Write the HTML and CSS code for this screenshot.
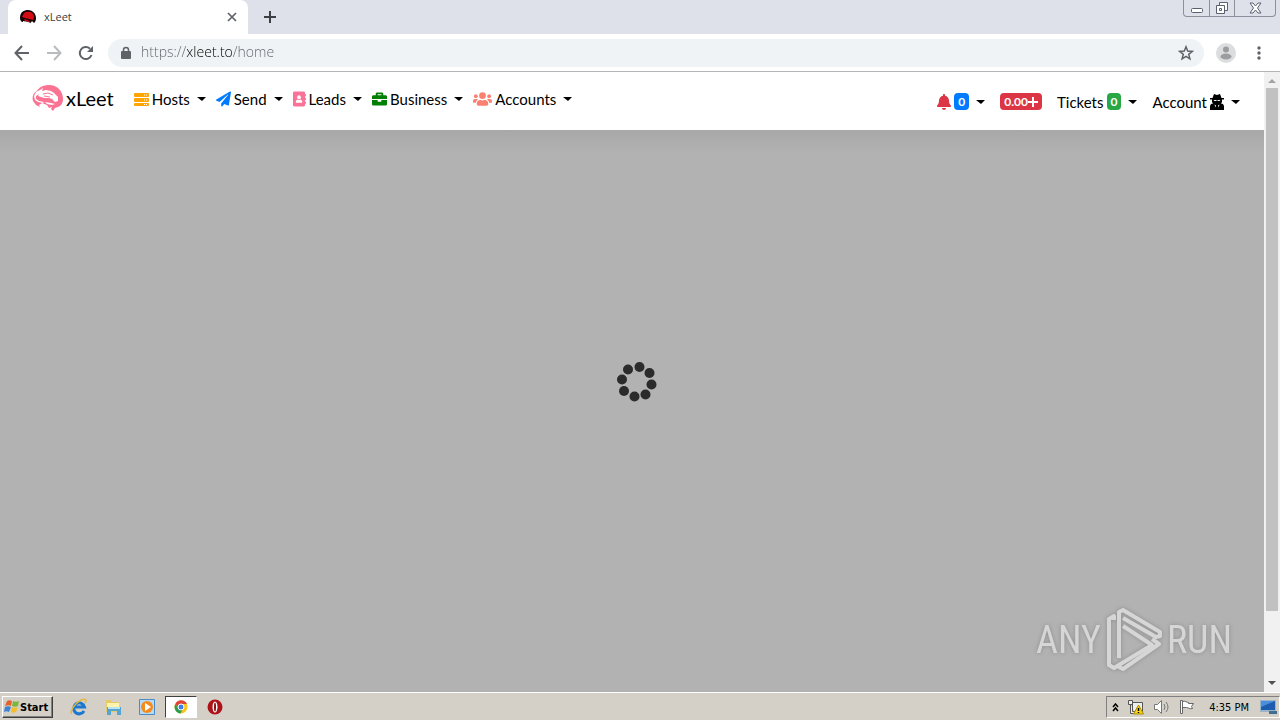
FILE: index.html
```html
<!DOCTYPE html>
<html lang="en">
<head>
    <meta charset="UTF-8">
    <meta name="viewport" content="width=device-width, initial-scale=1.0">
    <title>xLeet</title>
    <link rel="stylesheet" href="styles.css">
</head>
<body>

  <header class="tab-strip">
    <div class="tab">
      <svg class="favicon" viewBox="0 0 16 16">
        <path fill="#160508" d="M0 9C0 3 4 1 8 1s8 3 8 8c0 3-1 4-2 5l-2-2-2 3-3-2H3C1 13 0 11 0 9z"/>
        <path fill="#d40b12" d="M3 6c1-3 4-4 6-3 3 0 5 2 5 5l-1 3-4-1-4-1-3-1zM4 10l6 2-1 1-4-1z"/>
        <path fill="#fff" d="M3 12l5 1 3 1-1 2-3-1-4-1z"/>
      </svg>
      <span class="tab-title">xLeet</span>
      <button class="icon-btn" aria-label="Close tab">
        <svg width="10" height="10" viewBox="0 0 10 10"><path d="M1 1l8 8M9 1L1 9" stroke="#5f6368" stroke-width="1.700"/></svg>
      </button>
    </div>
    <button class="icon-btn new-tab" aria-label="New tab">
      <svg width="12" height="12" viewBox="0 0 12 12"><path d="M6 0v12M0 6h12" stroke="#3c4043" stroke-width="2"/></svg>
    </button>
    <div class="window-controls">
      <button aria-label="Minimize"><svg width="12" height="16" viewBox="0 0 12 16"><rect x=".5" y="8.500" width="11" height="4" rx="1" fill="#fff" stroke="#5b6070"/></svg></button>
      <button aria-label="Restore"><svg width="14" height="14" viewBox="0 0 14 14" fill="#fff" stroke="#5b6070"><path d="M4.500 1.500h8v8h-8z"/><path d="M1.500 4.500h8v8h-8z"/><path d="M4.500 7.500h2v2h-2z"/></svg></button>
      <button class="wide" aria-label="Close"><svg width="13" height="12" viewBox="0 0 13 12"><path d="M1 1h3l2.500 3L9 1h3L8.500 6l3.500 5H9L6.500 8 4 11H1l3.500-5z" fill="#fff" stroke="#5b6070"/></svg></button>
    </div>
  </header>

  <div class="toolbar">
    <button class="icon-btn" aria-label="Back"><svg width="16" height="16" viewBox="0 0 16 16"><path d="M15 8H2M8 1L1.500 8 8 15" fill="none" stroke="#5f6368" stroke-width="2"/></svg></button>
    <button class="icon-btn" aria-label="Forward"><svg width="16" height="16" viewBox="0 0 16 16"><path d="M1 8h13M8 1l6.500 7L8 15" fill="none" stroke="#b9bbbe" stroke-width="2"/></svg></button>
    <button class="icon-btn" aria-label="Reload"><svg width="16" height="16" viewBox="0 0 16 16"><path d="M13.500 10A6 6 0 1 1 12 3.700" fill="none" stroke="#5f6368" stroke-width="2"/><path d="M15 1v6H9z" fill="#5f6368"/></svg></button>
    <div class="omnibox">
      <svg width="10" height="14" viewBox="0 0 10 14"><path d="M2.500 6V4a2.500 2.500 0 0 1 5 0v2" fill="none" stroke="#5f6368" stroke-width="1.500"/><rect y="5" width="10" height="8" rx="1" fill="#5f6368"/></svg>
      <input class="url" type="text" value="https://xleet.to/home" aria-label="Address">
      <button class="icon-btn" aria-label="Bookmark"><svg width="16" height="16" viewBox="0 0 16 16"><path d="M8 1.800l1.700 4.300 4.600.3-3.600 2.900 1.200 4.500L8 11.300l-3.900 2.500 1.200-4.500-3.600-2.900 4.600-.3z" fill="none" stroke="#5f6368" stroke-width="1.500"/></svg></button>
    </div>
    <button class="icon-btn" aria-label="Profile"><svg width="20" height="20" viewBox="0 0 20 20"><circle cx="10" cy="10" r="10" fill="#dcdddf"/><circle cx="10" cy="6.500" r="3" fill="#9b9da1"/><ellipse cx="10" cy="13.500" rx="5.500" ry="3" fill="#9b9da1"/></svg></button>
    <button class="icon-btn menu" aria-label="Menu"><svg width="4" height="14" viewBox="0 0 4 14" fill="#5f6368"><circle cx="2" cy="2" r="1.700"/><circle cx="2" cy="7" r="1.700"/><circle cx="2" cy="12" r="1.700"/></svg></button>
  </div>

  <div class="viewport">
    <main class="page">
      <nav class="navbar">
        <a class="brand" href="#">
          <svg width="32" height="28" viewBox="0 0 32 28">
            <path fill="#fb7393" d="M1 17c-1-4 0-8 4-10 2-4 7-6 12-6 8 0 14 6 14 14 0 4-2 7-5 8l-3 1-2 3-2-2 1-2-3 1-2-3-5-2-3 2 1 2-4-2-3-4z"/>
            <path fill="#fff" d="M8 6l3-2-1 3 4-1 5 1 3 2 4 4 0 4-3 1-3-3-3-1-5 0-6-2 1-2-3 2 0 3 3 2 5 1-1 1-5-1-3-2-1-4 2-4zM13 18l6 1 4 1-3 1-5-1z"/>
            <path fill="none" stroke="#fb7393" d="M11 10l5-1 5 2M12 12l6 1"/>
          </svg>
          <span>xLeet</span>
        </a>

        <div class="nav-left">
          <button class="nav-link">
            <svg width="15" height="16" viewBox="0 0 15 16"><g fill="orange"><rect y="2" width="15" height="4" rx="1"/><rect y="7" width="15" height="4" rx="1"/><rect y="12" width="15" height="3" rx="1"/></g><g fill="#fff"><path d="M10 3.500h1v1h-1zM12 3.500h1v1h-1zM10 8.500h1v1h-1zM12 8.500h1v1h-1zM10 13h1v1h-1zM12 13h1v1h-1z"/></g></svg>
            Hosts<span class="caret"></span>
          </button>
          <button class="nav-link">
            <svg width="15" height="16" viewBox="0 0 512 512"><path fill="#007bff" d="M476 3.200L12.500 270.600c-18.100 10.400-15.800 35.600 2.200 43.200L121 358.400l287.300-253.200c5.500-4.900 13.300 2.600 8.600 8.300L176 407v80.500c0 23.600 28.500 32.900 42.500 15.800L282 426l124.600 52.200c14.200 6 30.400-2.900 33-18.200l72-432C515 7.800 493.300-6.800 476 3.200z"/></svg>
            Send<span class="caret"></span>
          </button>
          <button class="nav-link">
            <svg width="13" height="16" viewBox="0 0 448 512"><path fill="#fb7299" d="M436 160c6.600 0 12-5.400 12-12v-40c0-6.600-5.400-12-12-12h-20V48c0-26.500-21.500-48-48-48H48C21.500 0 0 21.500 0 48v416c0 26.500 21.500 48 48 48h320c26.500 0 48-21.500 48-48v-48h20c6.600 0 12-5.400 12-12v-40c0-6.600-5.400-12-12-12h-20v-64h20c6.600 0 12-5.400 12-12v-40c0-6.600-5.400-12-12-12h-20v-64z"/><circle cx="208" cy="192" r="64" fill="#fff"/><path fill="#fff" d="M96 365c0-60 40-89 70-89 30 14 55 14 84 0 30 0 70 29 70 89 0 12-10 19-22 19H118c-12 0-22-7-22-19z"/></svg>
            Leads<span class="caret"></span>
          </button>
          <button class="nav-link">
            <svg width="15" height="16" viewBox="0 0 512 512"><path fill="green" d="M320 336c0 8.840-7.160 16-16 16h-96c-8.840 0-16-7.160-16-16v-48H0v144c0 25.600 22.400 48 48 48h416c25.600 0 48-22.400 48-48V288H320v48zm144-208h-80V80c0-25.600-22.400-48-48-48H176c-25.600 0-48 22.400-48 48v48H48c-25.600 0-48 22.400-48 48v80h512v-80c0-25.600-22.400-48-48-48zm-144 0H192V96h128v32z"/></svg>
            Business<span class="caret"></span>
          </button>
          <button class="nav-link">
            <svg width="19" height="16" viewBox="0 0 640 512" fill="salmon"><circle cx="96" cy="160" r="64"/><circle cx="544" cy="160" r="64"/><circle cx="320" cy="144" r="112"/><path d="M0 320c0-35 29-64 64-64h64c18 0 33 7 45 18-40 22-69 62-75 110H32c-18 0-32-14-32-32zM640 320c0-35-29-64-64-64h-64c-18 0-33 7-45 18 40 22 69 62 75 110h66c18 0 32-14 32-32zM128 403c0-64 52-115 115-115h8c45 21 93 21 138 0h8c63 0 115 51 115 115v29c0 27-21 48-48 48H176c-27 0-48-21-48-48z"/></svg>
            Accounts<span class="caret"></span>
          </button>
        </div>

        <div class="nav-right">
          <button class="nav-link" aria-label="Notifications">
            <svg width="14" height="16" viewBox="0 0 448 512"><path fill="#dc3545" d="M224 512c35.320 0 63.970-28.650 63.970-64H160.030c0 35.350 28.650 64 63.970 64zm215.390-149.710c-19.320-20.760-55.470-51.990-55.470-154.290 0-77.700-54.480-139.900-127.940-155.160V32c0-17.670-14.320-32-31.980-32s-31.980 14.330-31.980 32v20.840C118.560 68.100 64.080 130.300 64.080 208c0 102.300-36.150 133.530-55.470 154.290-6 6.450-8.660 14.160-8.610 21.710.11 16.400 12.980 32 32.100 32h383.800c19.120 0 32-15.600 32.100-32 .05-7.550-2.610-15.270-8.610-21.710z"/></svg>
            <span class="badge blue">0</span><span class="caret"></span>
          </button>
          <a class="badge red" href="#">0.00<svg width="10" height="10" viewBox="0 0 10 10"><path d="M5 0v10M0 5h10" stroke="#fff" stroke-width="2"/></svg></a>
          <button class="nav-link">Tickets <span class="badge green">0</span><span class="caret"></span></button>
          <button class="nav-link">Account
            <svg width="14" height="16" viewBox="0 0 14 16"><path d="M4 0l3 1 3-1 1.500 4H14v1.500h-2L12 8l-1 1.500 2 .5 1 2v4H0v-4l1-2 2-.5L2 8V5.500H0V4h2.500z"/><path fill="#fff" d="M3.500 6h3v1h-2zM7.500 6h3l-1 1h-2zM4.500 10.500l1.500 1-.5 2zM9.500 10.500l-1.500 1 .5 2z"/></svg>
            <span class="caret"></span>
          </button>
        </div>
      </nav>

      <div class="loading">
        <svg class="spinner" width="42" height="42" viewBox="0 0 42 42" fill="#2b2b2b">
          <circle cx="23.500" cy="6" r="5"/><circle cx="33.500" cy="12" r="5"/><circle cx="35.500" cy="23.500" r="5"/><circle cx="29.500" cy="33.500" r="5"/><circle cx="18.500" cy="35.500" r="5"/><circle cx="8" cy="30" r="5"/><circle cx="6" cy="18.500" r="5"/><circle cx="12" cy="8.500" r="5"/>
        </svg>
        <div class="watermark">
          <span>ANY</span>
          <svg width="56" height="64" viewBox="0 0 56 64" fill="none" stroke="#d6d6d6" stroke-width="4" stroke-linejoin="round">
            <path d="M8 12V8L3 11v46l5 3 38-23-29-19"/>
            <path d="M13 50V4l4-2 37 22v4l-4 1-33-19"/>
            <path d="M46 31l7 5-36 25-4-2v-3"/>
          </svg>
          <span>RUN</span>
        </div>
      </div>
    </main>

    <div class="scrollbar">
      <svg width="8" height="4" viewBox="0 0 8 4"><path d="M0 4l4-4 4 4z" fill="#a3a3a3"/></svg>
      <div class="track"><div class="thumb"></div></div>
      <svg width="8" height="4" viewBox="0 0 8 4"><path d="M0 0l4 4 4-4z" fill="#505050"/></svg>
    </div>
  </div>

  <footer class="taskbar">
    <button class="start">
      <svg width="16" height="16" viewBox="0 0 16 16"><path fill="#e8602c" d="M3 2c2-1 3-1 5 0L7 7C5 6 4 6 1 7z"/><path fill="#7db63c" d="M9 2c2 1 4 1 6 0l-1 5c-2 1-4 1-6 0z"/><path fill="#3b83d3" d="M1 8c2-1 4-1 6 0l-2 5c-2-1-3-1-5 0z"/><path fill="#f5bd2b" d="M8 8c2 1 4 1 6 0l-2 5c-2 1-4 1-5 0z"/></svg>
      Start
    </button>
    <div class="quick">
      <button aria-label="Internet Explorer"><svg width="18" height="18" viewBox="0 0 18 18" fill="none"><path d="M14 13a5.500 5.500 0 1 1 .5-4H5" stroke="#1c78cf" stroke-width="3"/><path d="M2 16c-3-2 3-11 9-14 5-2 6 0 4 3" stroke="#e5b73b" stroke-width="1.500"/></svg></button>
      <button aria-label="Explorer"><svg width="18" height="18" viewBox="0 0 18 18"><path fill="#e5ca67" d="M2 2h5l1 2h7v10H2z"/><path fill="#fff3ae" d="M3 5h12v7H3z"/><path fill="#55a5d2" d="M3 9h14v8h-4v-4H7v4H3z"/><path fill="#b9e2f3" d="M4 9h12v2H4z"/></svg></button>
      <button aria-label="Media Player"><svg width="18" height="18" viewBox="0 0 18 18"><path fill="#b8d9f2" stroke="#4b8cc8" d="M1.500 1.500h15v15h-15z"/><circle cx="9" cy="9" r="6" fill="#f48b1c"/><path fill="#fff" d="M7 5l6 4-6 4z"/></svg></button>
      <button class="active" aria-label="Chrome"><svg width="14" height="14" viewBox="0 0 14 14"><circle cx="7" cy="7" r="6.500" fill="#fbc51b"/><path fill="#de4437" d="M1.300 4A6.500 6.500 0 0 1 13 4H7L5 9z"/><path fill="#2b9d4c" d="M1.300 4A6.500 6.500 0 0 0 6.500 13.500L9.500 8H4z"/><circle cx="7" cy="7" r="3" fill="#3f7de8" stroke="#fff"/></svg></button>
      <button aria-label="Opera"><svg width="16" height="16" viewBox="0 0 16 16"><circle cx="8" cy="8" r="7.500" fill="#ad1218"/><ellipse cx="8" cy="8" rx="2.500" ry="5.500" fill="#fff"/><ellipse cx="8" cy="8" rx="1" ry="4.500" fill="#8d1015"/></svg></button>
    </div>
    <div class="tray">
      <svg width="7" height="9" viewBox="0 0 7 9" fill="none" stroke="#000" stroke-width="1.500"><path d="M1 4l2.500-3L6 4M1 8l2.500-3L6 8"/></svg>
      <svg width="18" height="16" viewBox="0 0 18 16"><path fill="#eee" stroke="#555" d="M5.500 3.500h10v9h-10zM1.500 1.500h4v4h-4zM3.500 5.500v9h5"/><path fill="#f7d51d" stroke="#a98b00" d="M11.500 6l5 9h-10z"/><path stroke="#000" stroke-width="1.500" d="M11.500 9v3M11.500 13v1"/></svg>
      <svg width="18" height="16" viewBox="0 0 18 16" fill="none" stroke="#777"><path fill="#fff" d="M1.500 5.500h3l4-4v13l-4-4h-3z"/><path d="M11 5q2 3 0 6M13 3q4 5 0 10"/></svg>
      <svg width="17" height="16" viewBox="0 0 17 16" fill="#fff" stroke="#666"><path d="M1.500 1.500h2v13h-2zM3.500 2.500c3-1 4 1 6 1v1h5l-2 3 1 2c-3 1-4-1-6-1h-4z"/></svg>
      <time>4:35 PM</time>
      <svg width="17" height="14" viewBox="0 0 17 14"><path fill="#9bb4c8" d="M0 0h16v12H0z"/><path fill="#1d5cae" d="M1 1h14v9H1z"/><path fill="#4b8fdc" d="M1 1h14L1 7z"/><path fill="#416d91" d="M9 11h8v3H9z"/></svg>
    </div>
  </footer>

</body>
</html>
```

FILE: styles.css
```css
* {
    box-sizing: border-box;
}
body {
    margin: 0;
    height: 100vh;
    display: flex;
    flex-direction: column;
    overflow: hidden;
    background: white;
    font-family: Lato, sans-serif;
}
button {
    margin: 0;
    padding: 0;
    border: 0;
    background: none;
    color: inherit;
    font: inherit;
    cursor: pointer;
}
svg {
    display: block;
    flex: none;
}
a {
    color: inherit;
    text-decoration: none;
}

/* browser window */
.tab-strip {
    display: flex;
    height: 34px;
    padding-left: 8px;
    background: #dee1e9;
}
.tab {
    display: flex;
    align-items: center;
    gap: 8px;
    width: 240px;
    padding: 0 11px 1px 12px;
    background: white;
    border-radius: 8px 8px 0 0;
    font: 11px "Open Sans", sans-serif;
    color: #3c4043;
}
.favicon {
    width: 16px;
    height: 16px;
}
.tab-title {
    flex: 1;
}
.icon-btn {
    display: flex;
    align-items: center;
    justify-content: center;
}
.new-tab {
    width: 44px;
}
.window-controls {
    display: flex;
    height: 17px;
    margin: 0 4px 0 auto;
    border: 1px solid #8c909c;
    border-top: 0;
    border-radius: 0 0 4px 4px;
}
.window-controls button {
    display: flex;
    align-items: center;
    justify-content: center;
    width: 25px;
}
.window-controls button + button {
    border-left: 1px solid #8c909c;
}
.window-controls .wide {
    width: 41px;
}
.toolbar {
    display: flex;
    align-items: center;
    gap: 16px;
    height: 38px;
    padding: 0 14px;
    border-bottom: 1px solid #b4b5b6;
}
.toolbar .menu {
    width: 14px;
}
.omnibox {
    flex: 1;
    display: flex;
    align-items: center;
    gap: 10px;
    height: 28px;
    margin: 0 -4px 0 -2px;
    padding: 0 10px 0 13px;
    border-radius: 14px;
    background: #f0f3f5;
}
.url {
    flex: 1;
    min-width: 0;
    padding: 0 0 2px;
    border: 0;
    outline: 0;
    color: transparent;
    font: 300 14px "Open Sans", sans-serif;
    /* host is darker than the scheme and path */
    background: linear-gradient(90deg, #5f6368 46px, #000 46px, #000 92px, #5f6368 92px);
    background-clip: text;
    -webkit-background-clip: text;
}

/* page */
.viewport {
    flex: 1;
    display: flex;
    min-height: 0;
}
.page {
    flex: 1;
    display: flex;
    flex-direction: column;
}
.navbar {
    display: flex;
    align-items: center;
    height: 58px;
    padding: 0 24px 0 32px;
    background: white;
    color: black;
    font-size: 15px;
}
.brand {
    display: flex;
    align-items: center;
    gap: 2px;
    margin-right: 20px;
    padding-bottom: 6px;
    font-size: 20px;
}
.nav-left,
.nav-right {
    display: flex;
    align-items: center;
}
.nav-left {
    gap: 10px;
    padding-bottom: 4px;
}
.nav-right {
    gap: 15px;
    margin-left: auto;
    padding-top: 1px;
}
.nav-link {
    display: flex;
    align-items: center;
    gap: 3px;
    white-space: nowrap;
}
.caret {
    margin-left: 4px;
    border: 5px solid transparent;
    border-width: 4px 4px 0 5px;
    border-top-color: black;
}
.badge {
    display: flex;
    align-items: center;
    height: 17px;
    padding: 0 4px;
    border-radius: 4px;
    color: white;
    font-size: 12px;
    font-weight: bold;
}
.blue {
    background: #007bff;
}
.red {
    background: #dc3545;
}
.green {
    background: #28a745;
}
.loading {
    flex: 1;
    display: grid;
    place-items: center;
    position: relative;
    background: linear-gradient(#a8a8a8, #b2b2b2 24px);
}
.spinner {
    margin: 0 0 58px 10px;
}
.watermark {
    position: absolute;
    right: 32px;
    bottom: 20px;
    display: flex;
    align-items: center;
    gap: 5px;
    color: #d6d6d6;
    font: 38px "Roboto Condensed", "Liberation Sans Narrow", "Open Sans Condensed", sans-serif;
    filter: drop-shadow(0 0 2px #8c8c8c);
}
.scrollbar {
    display: flex;
    flex-direction: column;
    align-items: center;
    gap: 5px;
    width: 16px;
    padding: 7px 1px;
    background: #f1f1f1;
}
.track {
    flex: 1;
    width: 100%;
}
.thumb {
    width: 12px;
    height: 89%;
    margin: 0 auto;
    background: #c1c1c1;
}

/* desktop taskbar */
.taskbar {
    display: flex;
    align-items: center;
    height: 28px;
    padding: 1px 0 0 2px;
    border-top: 1px solid white;
    background: #d4d0c8;
    color: black;
    font: 11px "DejaVu Sans Condensed", "DejaVu Sans", sans-serif;
}
.start {
    display: flex;
    align-items: center;
    height: 22px;
    padding: 0 4px 0 1px;
    border: 1px solid;
    border-color: white #404040 #404040 white;
    box-shadow: inset -1px -1px #808080;
    font-weight: bold;
}
.quick {
    display: flex;
    align-items: center;
    gap: 2px;
    margin-left: 10px;
}
.quick button {
    display: flex;
    align-items: center;
    justify-content: center;
    width: 32px;
    height: 22px;
}
.quick .active {
    background: white;
    border: 1px solid;
    border-color: #404040 white white #404040;
}
.tray {
    display: flex;
    align-items: center;
    gap: 8px;
    height: 22px;
    margin-left: auto;
    padding: 0 2px 0 5px;
    border: 1px solid;
    border-color: #808080 white white #808080;
}
.tray time {
    margin: 0 3px 0 5px;
}
```
